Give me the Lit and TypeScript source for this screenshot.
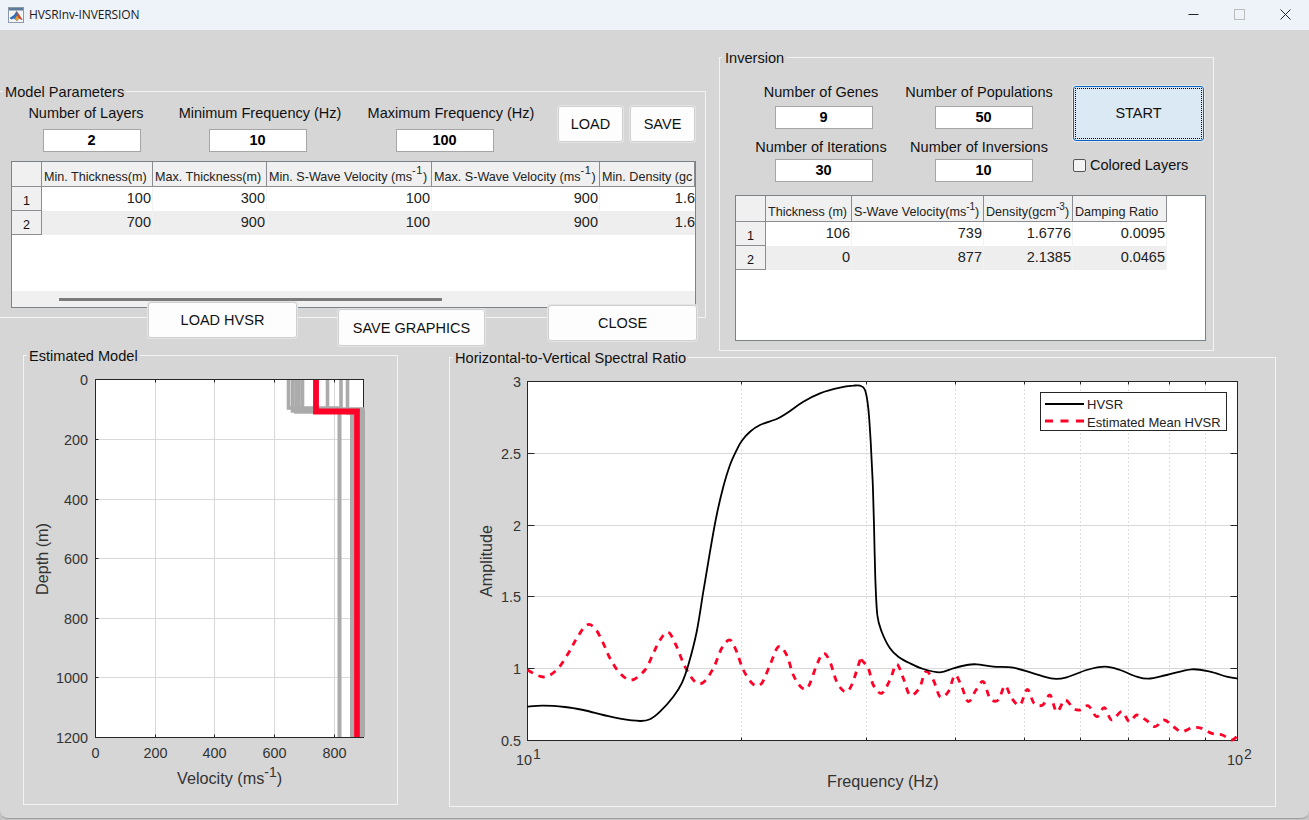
import { LitElement, html, css, svg } from "lit";
import { customElement } from "lit/decorators.js";

type P = [number, number];
const z4 = (a: number[][]): P[] => a.map(([x, y]) => [440 + x / 3, 345 + y / 3] as P);
const z5 = (a: number[][]): P[] => a.map(([x, y]) => [860 + x / 3, 345 + y / 3] as P);

const smooth = (p: P[]) => {
  let d = `M${p[0][0].toFixed(1)} ${p[0][1].toFixed(1)}`;
  for (let i = 0; i < p.length - 1; i++) {
    const a = p[Math.max(0, i - 1)], b = p[i], c = p[i + 1], e = p[Math.min(p.length - 1, i + 2)];
    const c1: P = [b[0] + (c[0] - a[0]) / 6, b[1] + (c[1] - a[1]) / 6];
    const c2: P = [c[0] - (e[0] - b[0]) / 6, c[1] - (e[1] - b[1]) / 6];
    d += `C${c1[0].toFixed(1)} ${c1[1].toFixed(1)} ${c2[0].toFixed(1)} ${c2[1].toFixed(1)} ${c[0].toFixed(1)} ${c[1].toFixed(1)}`;
  }
  return d;
};

const BLACK = smooth([
  ...z4([[262,1085],[310,1082],[375,1086],[430,1095],[490,1110],[540,1121],[600,1128],[630,1123],[660,1100],[700,1055],[725,1015],[745,960],[770,860],[790,740],[810,620],[830,510],[850,425],[870,360],[890,315],[905,288],[930,260],[960,240],[1010,222],[1040,205],[1090,170],[1140,145],[1200,128],[1240,122]]),
  ...z5([[0,122],[15,135],[25,190],[32,290],[38,410],[42,540],[46,700],[52,810],[65,860],[90,910],[115,935],[150,955],[190,972],[240,982],[280,970],[320,960],[350,958],[400,965],[460,968],[520,985],[580,1001],[620,997],[680,975],[735,965],[780,975],[830,995],[865,1001],[920,990],[995,973],[1050,980],[1100,995],[1133,1001]]),
]);
const RED = smooth([
  ...z4([[262,975],[310,996],[350,975],[385,925],[410,880],[440,840],[465,850],[490,895],[510,940],[540,985],[575,1005],[615,975],[640,925],[660,885],[685,862],[710,905],[735,965],[765,1010],[790,1012],[820,970],[845,910],[870,885],[890,920],[910,975],[940,1018],[965,1015],[990,960],[1015,905],[1040,930],[1060,990],[1085,1028],[1105,1025],[1130,960],[1150,925],[1170,950],[1190,1010],[1215,1040],[1235,1020],[1262,940]]),
  ...z5([[5,945],[25,970],[40,1020],[65,1045],[90,1005],[110,958],[130,1000],[150,1050],[178,1030],[197,980],[220,1005],[240,1055],[265,1040],[285,990],[305,1025],[325,1070],[348,1035],[370,1010],[390,1060],[415,1065],[435,1022],[455,1060],[480,1080],[502,1033],[522,1075],[548,1080],[570,1050],[590,1100],[615,1065],[640,1090],[660,1095],[685,1082],[710,1115],[733,1088],[755,1125],[785,1100],[808,1130],[830,1110],[858,1125],[885,1145],[912,1125],[940,1145],[965,1160],[997,1148],[1025,1150],[1055,1165],[1087,1170],[1115,1185],[1133,1172]]),
]);

const COLS_A = ["Min. Thickness(m)", "Max. Thickness(m)"];
const ROWS_A = [["100", "300", "100", "900", "1.6"], ["700", "900", "100", "900", "1.6"]];
const ROWS_B = [["106", "739", "1.6776", "0.0095"], ["0", "877", "2.1385", "0.0465"]];

// Estimated model: gray ensemble lines, in page pixels
const GRAY_STEPS: number[][] = [
  [288.5, 408, 339.5],
  [292.5, 411, 352],
  [296, 412, 339.5],
  [299, 410, 352],
  [302.5, 409, 362.5],
  [327.5, 410, 362.5],
  [341, 412, 352],
  [347.5, 413, 352],
];

@customElement("app-root")
export class AppRoot extends LitElement {
  static styles = css`
    :host { display: block; width: 1309px; height: 820px; background: #c4c4c4; overflow: hidden;
      font-family: "Liberation Sans", Arial, sans-serif; color: #111; }
    .win { height: 818px; background: #d6d6d6; border-bottom: 1px solid #a0a0a0; border-radius: 0 0 8px 8px; overflow: hidden; }
    .title { box-sizing: border-box; height: 30px; padding-bottom: 1px; background: #eef2f9; display: flex; align-items: center; }
    .title svg { display: block; }
    .app-icon { margin-left: 8px; margin-right: 5px; }
    .title-text { font: 12px "Open Sans", sans-serif; color: #1a1a1a; flex: 1; letter-spacing: -0.12px; }
    .ctl { display: block; flex: none; }
    .c-min { margin-right: 35px; }
    .c-max { margin-right: 35px; }
    .c-close { margin-right: 18px; }

    .top { height: 325px; display: flex; }
    .left { width: 719px; flex: none; padding-top: 61px; box-sizing: border-box; }
    .right { padding-top: 27px; }

    .panel { position: relative; box-sizing: border-box; border: 1px solid #f3f3ef; }
    .legend { position: absolute; background: #d6d6d6; font-size: 14.6px; line-height: 17px; padding: 0 2px; white-space: nowrap; }

    .p-model { width: 707px; height: 227px; margin-left: -1px; }
    .p-model .legend { top: -8px; left: 3px; }
    .params { display: flex; align-items: flex-start; padding-top: 13px; }
    .field { display: flex; flex-direction: column; flex: none; }
    .lab { font-size: 14.5px; line-height: 17px; text-align: center; white-space: nowrap; }
    .inp { box-sizing: border-box; height: 23px; width: 98px; padding-right: 1px; background: #fff; border: 1px solid #a6a6a6;
      font-weight: 700; font-size: 14.5px; line-height: 21px; text-align: center; color: #000; }
    .f1 { width: 116px; margin-left: 28px; }
    .f1 .inp { margin: 7px 0 0 15px; }
    .f2 { width: 164px; margin-left: 34px; }
    .f2 .inp { margin: 7px 0 0 31px; }
    .f3 { width: 168px; margin-left: 25px; }
    .f3 .inp { margin: 7px 0 0 29px; }

    .btn { box-sizing: border-box; flex: none; background: #fdfdfd; border: 1px solid #cfcfcf; border-radius: 3px;
      box-shadow: 0 0 0 1px #e4e4e4; display: flex; align-items: center; justify-content: center;
      font-size: 14.5px; color: #111; white-space: nowrap; }
    .b-load { width: 65px; height: 36px; margin: 1px 0 0 23px; }
    .b-save { width: 65px; height: 36px; margin: 1px 0 0 7px; }

    .tbl { box-sizing: border-box; border: 1px solid #7d8286; background: #fff; display: flex; flex-direction: column; overflow: hidden; }
    .t-a { width: 685px; height: 147px; margin: 9px 0 0 11px; }
    .t-b { width: 471px; height: 146px; margin: 12px 0 0 15px; }
    .tr { display: grid; height: 24px; flex: none; }
    .t-a .tr { grid-template-columns: 30px 111px 114px 165px 168px 95px; }
    .t-b .tr { grid-template-columns: 30px 86px 132px 89px 94px; width: 431px; }
    .t-a .tr.head { height: 25px; }
    .t-b .tr.head { height: 26px; }
    .th, .rh { box-sizing: border-box; background: #f0f0f0; border-right: 1px solid #8a8e92; border-bottom: 1px solid #8a8e92; overflow: hidden; white-space: nowrap; }
    .th { font-size: 12.6px; line-height: 30px; padding-left: 2px; color: #222; }
    .t-b .th { line-height: 32px; }
    .th sup { font-size: 10px; line-height: 0; vertical-align: 6px; }
    .t-a .th sup { font-size: 11px; letter-spacing: 0.6px; vertical-align: 7px; }
    .rh { font-size: 12.6px; line-height: 28px; text-align: center; }
    .tr.alt .td { background: #eeeeee; }
    .td { box-sizing: border-box; font-size: 14.5px; line-height: 22px; text-align: right; padding-right: 1px; border-right: 1px solid #f2f2f2; background: #fff; overflow: hidden; color: #222; }
    .t-a .td:last-child { padding-right: 0; border-right: 0; }
    .fill { flex: 1; background: #fff; }
    .scroll { height: 16px; flex: none; background: #f0f0f0; }
    .thumb { width: 383px; height: 3px; margin: 7px 0 0 47px; background: #7b7b7b; }

    .b-row { display: flex; align-items: flex-start; position: relative; margin-top: -16px; }
    .b-hvsr { width: 149px; height: 36px; margin-left: 148px; }
    .b-gfx { width: 147px; height: 37px; margin: 7px 0 0 41px; }
    .b-close { width: 149px; height: 36px; margin: 3px 0 0 63px; }

    .p-inv { width: 495px; height: 294px; }
    .p-inv .legend { top: -8px; left: 2px; padding: 0 3px; }
    .inv-top { display: flex; align-items: flex-start; padding: 26px 0 0 25px; height: 99px; box-sizing: content-box; }
    .inv-grid { display: grid; grid-template-columns: 152px 164px; flex: none; row-gap: 10px; }
    .g1 .inp { margin: 5px 0 0 30px; }
    .g2 .inp { margin: 5px 0 0 38px; }
    .g1.r2 .inp { margin: 3px 0 0 30px; }
    .g2.r2 .inp { margin: 3px 0 0 38px; }
    .inv-side { margin: 2px 0 0 12px; }
    .start { box-sizing: border-box; width: 131px; height: 55px; background: #dbe9f5; border: 1.5px solid #0a66c2; border-radius: 3px;
      box-shadow: 0 0 0 1px #e8e8e8; display: flex; align-items: center; justify-content: center; font-size: 14.5px; color: #111; outline: 1px dotted #000; outline-offset: -3px; padding-bottom: 1px; }
    .chk { display: flex; align-items: center; margin-top: 16px; font-size: 14.5px; line-height: 17px; }
    .box { box-sizing: border-box; width: 13px; height: 13px; background: #f4f4f4; border: 1px solid #555; border-radius: 2px; margin-right: 4px; }

    .bottom { display: flex; align-items: flex-start; margin-left: 23px; }
    .p-est { width: 375px; height: 450px; }
    .p-est .legend { top: -8px; left: 3px; }
    .p-hv { width: 827px; height: 450px; margin: 2px 0 0 51px; }
    .p-hv .legend { top: -8px; left: 3px; }
    .plot { display: block; overflow: visible; }
    .tick { font: 14.4px "Liberation Sans", Arial, sans-serif; fill: #333; }
    .axl { font: 16.2px "Liberation Sans", Arial, sans-serif; fill: #333; }
    .sup { font: 14px "Liberation Sans", Arial, sans-serif; fill: #333; }
    .lg { font: 13px "Liberation Sans", Arial, sans-serif; fill: #222; }
  `;

  private thead(labels: unknown[]) {
    return html`<div class="tr head"><div class="th"></div>${labels.map((l) => html`<div class="th">${l}</div>`)}</div>`;
  }

  private tbody(rows: string[][]) {
    return rows.map(
      (r, i) => html`<div class="tr ${i % 2 ? "alt" : ""}"><div class="rh">${i + 1}</div>${r.map((c) => html`<div class="td">${c}</div>`)}</div>`
    );
  }

  private estPlot() {
    const X0 = 95.5, X1 = 363.5, Y0 = 379.5, Y1 = 737.5;
    const xt = [0, 200, 400, 600, 800].map((v) => [v, Math.floor(95.3 + v * 0.2987) + 0.5]);
    const yt: number[][] = [[0, 379.5], [200, 439.5], [400, 499.5], [600, 558.5], [800, 618.5], [1000, 677.5], [1200, 737.5]];
    return html`<svg class="plot" width="373" height="448" viewBox="24 356 373 448">
      <rect x=${X0} y=${Y0} width=${X1 - X0} height=${Y1 - Y0} fill="#fff"></rect>
      ${xt.slice(1).map(([, x]) => svg`<line x1=${x} x2=${x} y1=${Y0} y2=${Y1} stroke="#d9d9d9"></line><line x1=${x} x2=${x} y1=${Y0} y2=${Y0 + 3} stroke="#262626"></line><line x1=${x} x2=${x} y1=${Y1} y2=${Y1 - 3} stroke="#262626"></line>`)}
      ${yt.slice(1, -1).map(([, y]) => svg`<line x1=${X0} x2=${X1} y1=${y} y2=${y} stroke="#d9d9d9"></line><line x1=${X0} x2=${X0 + 3} y1=${y} y2=${y} stroke="#262626"></line>`)}
      <rect x=${X0} y=${Y0} width=${X1 - X0} height=${Y1 - Y0} fill="none" stroke="#262626"></rect>
      ${GRAY_STEPS.map(([x, d, x2]) => svg`<path d="M${x} 380V${d}H${x2}V737" fill="none" stroke="#ababab" stroke-width="3.6"></path>`)}
      <path d="M362.5 409V737" fill="none" stroke="#ababab" stroke-width="5"></path>
      <path d="M316 380V411.5H357V737" fill="none" stroke="#ff0028" stroke-width="5.8"></path>
      ${yt.map(([v, y]) => svg`<text class="tick" x="88" y=${y + 5} text-anchor="end">${v}</text>`)}
      ${xt.map(([v, x]) => svg`<text class="tick" x=${x} y="758" text-anchor="middle">${v}</text>`)}
      <text class="axl" x="177" y="784">Velocity (ms<tspan class="sup" dy="-7">-1</tspan><tspan dy="7">)</tspan></text>
      <text class="axl" transform="translate(48 595) rotate(-90)">Depth (m)</text>
    </svg>`;
  }

  private hvPlot() {
    const X0 = 527.5, X1 = 1237.5, Y0 = 381.5, Y1 = 740.5;
    const freqs = [20, 30, 40, 50, 60, 70, 80, 90].map((f) => Math.round(527.3 + 710.4 * Math.log10(f / 10)) + 0.5);
    const yt: [string, number][] = [["3", 381.5], ["2.5", 453.5], ["2", 525.5], ["1.5", 596.5], ["1", 668.5], ["0.5", 740.5]];
    return html`<svg class="plot" width="825" height="448" viewBox="450 358 825 448">
      <rect x=${X0} y=${Y0} width=${X1 - X0} height=${Y1 - Y0} fill="#fff"></rect>
      ${freqs.map((x) => svg`<line x1=${x} x2=${x} y1=${Y0} y2=${Y1} stroke="#bdbdbd" stroke-dasharray="1 3"></line><line x1=${x} x2=${x} y1=${Y0} y2=${Y0 + 3} stroke="#262626"></line><line x1=${x} x2=${x} y1=${Y1} y2=${Y1 - 3} stroke="#262626"></line>`)}
      ${yt.slice(1, -1).map(([, y]) => svg`<line x1=${X0} x2=${X1} y1=${y} y2=${y} stroke="#d9d9d9"></line><line x1=${X0} x2=${X0 + 7} y1=${y} y2=${y} stroke="#262626"></line><line x1=${X1} x2=${X1 - 7} y1=${y} y2=${y} stroke="#262626"></line>`)}
      <rect x=${X0} y=${Y0} width=${X1 - X0} height=${Y1 - Y0} fill="none" stroke="#262626"></rect>
      <path d=${RED} fill="none" stroke="#ff0028" stroke-width="2.8" stroke-dasharray="6.5 6"></path>
      <path d=${BLACK} fill="none" stroke="#000" stroke-width="1.8"></path>
      <rect x="1040.5" y="392.5" width="186" height="38" fill="#fff" stroke="#262626"></rect>
      <line x1="1045" x2="1084" y1="404" y2="404" stroke="#000" stroke-width="2"></line>
      <line x1="1045" x2="1084" y1="421" y2="421" stroke="#ff0028" stroke-width="3" stroke-dasharray="8 7.5"></line>
      <text class="lg" x="1087" y="409">HVSR</text>
      <text class="lg" x="1087" y="427">Estimated Mean HVSR</text>
      ${yt.map(([v, y]) => svg`<text class="tick" x="521" y=${y + 5} text-anchor="end">${v}</text>`)}
      <text class="tick" x="516" y="765">10<tspan class="sup" dy="-6" dx="1">1</tspan></text>
      <text class="tick" x="1227" y="765">10<tspan class="sup" dy="-6" dx="1">2</tspan></text>
      <text class="axl" x="827" y="787">Frequency (Hz)</text>
      <text class="axl" transform="translate(492 597) rotate(-90)">Amplitude</text>
    </svg>`;
  }

  render() {
    const ms = html`(ms<sup>-1</sup>)`;
    const headA = [...COLS_A, html`Min. S-Wave Velocity ${ms}`, html`Max. S-Wave Velocity ${ms}`, "Min. Density (gc"];
    const headB = ["Thickness (m)", html`S-Wave Velocity${ms}`, html`Density(gcm<sup>-3</sup>)`, "Damping Ratio"];
    return html`<div class="win">
      <div class="title">
        <svg class="app-icon" width="16" height="16" viewBox="0 0 16 16">
          <rect x="0.5" y="0.5" width="15" height="15" fill="#f2f4f6" stroke="#8d99a6"></rect>
          <rect x="1" y="1" width="14" height="2.5" fill="#5d7a99"></rect>
          <path d="M1.5 11 6 8 8.5 4 10 6 14.5 13 11 11.5 9 14 6 11.5 3.5 12.5Z" fill="#2f6fb5"></path>
          <path d="M8.5 4 10 6 14.5 13 11 11.5 9 8.5Z" fill="#d8461a"></path>
          <path d="M9 8.5 11 11.5 9 14 7 11.5Z" fill="#f09a25"></path>
        </svg>
        <span class="title-text">HVSRInv-INVERSION</span>
        <svg class="ctl c-min" width="11" height="11" viewBox="0 0 11 11"><path d="M0.5 5.5H10.5" stroke="#222" stroke-width="1"></path></svg>
        <svg class="ctl c-max" width="11" height="11" viewBox="0 0 11 11"><rect x="0.5" y="0.5" width="10" height="10" fill="none" stroke="#bcbcbc"></rect></svg>
        <svg class="ctl c-close" width="11" height="11" viewBox="0 0 11 11"><path d="M0.5 0.5 10.5 10.5M10.5 0.5 0.5 10.5" stroke="#222" stroke-width="1"></path></svg>
      </div>
      <div class="top">
        <div class="left">
          <div class="panel p-model">
            <span class="legend">Model Parameters</span>
            <div class="params">
              <div class="field f1"><span class="lab">Number of Layers</span><div class="inp">2</div></div>
              <div class="field f2"><span class="lab">Minimum Frequency (Hz)</span><div class="inp">10</div></div>
              <div class="field f3"><span class="lab">Maximum Frequency (Hz)</span><div class="inp">100</div></div>
              <div class="btn b-load">LOAD</div>
              <div class="btn b-save">SAVE</div>
            </div>
            <div class="tbl t-a">
              ${this.thead(headA)}
              ${this.tbody(ROWS_A)}
              <div class="fill"></div>
              <div class="scroll"><div class="thumb"></div></div>
            </div>
          </div>
          <div class="b-row">
            <div class="btn b-hvsr">LOAD HVSR</div>
            <div class="btn b-gfx">SAVE GRAPHICS</div>
            <div class="btn b-close">CLOSE</div>
          </div>
        </div>
        <div class="right">
          <div class="panel p-inv">
            <span class="legend">Inversion</span>
            <div class="inv-top">
              <div class="inv-grid">
                <div class="field g1"><span class="lab">Number of Genes</span><div class="inp">9</div></div>
                <div class="field g2"><span class="lab">Number of Populations</span><div class="inp">50</div></div>
                <div class="field g1 r2"><span class="lab">Number of Iterations</span><div class="inp">30</div></div>
                <div class="field g2 r2"><span class="lab">Number of Inversions</span><div class="inp">10</div></div>
              </div>
              <div class="inv-side">
                <div class="start">START</div>
                <div class="chk"><span class="box"></span>Colored Layers</div>
              </div>
            </div>
            <div class="tbl t-b">
              ${this.thead(headB)}
              ${this.tbody(ROWS_B)}
            </div>
          </div>
        </div>
      </div>
      <div class="bottom">
        <div class="panel p-est"><span class="legend">Estimated Model</span>${this.estPlot()}</div>
        <div class="panel p-hv"><span class="legend">Horizontal-to-Vertical Spectral Ratio</span>${this.hvPlot()}</div>
      </div>
    </div>`;
  }
}
